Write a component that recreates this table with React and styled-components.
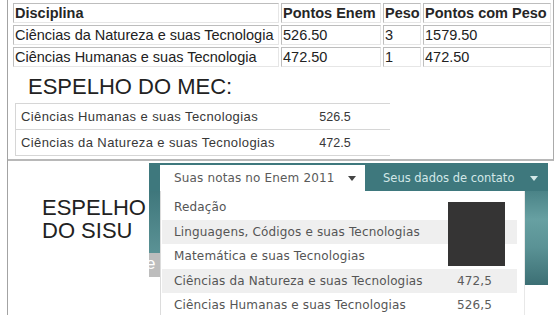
import React from "react";
import styled, { createGlobalStyle } from "styled-components";

const GlobalStyle = createGlobalStyle`
  html, body {
    margin: 0;
    padding: 0;
    background: #fff;
  }
  body {
    width: 560px;
    height: 315px;
    overflow: hidden;
    font-family: "Liberation Sans", Arial, sans-serif;
  }
  * {
    box-sizing: border-box;
  }
`;

const Page = styled.div`
  margin-left: 7px;
  width: 547px;
  height: 315px;
  border-left: 1px solid #a3a3a3;
`;

const TopFrame = styled.div`
  height: 161px;
  border-right: 1px solid #ababab;
  border-bottom: 2px solid #b8b8b8;
  padding: 1px 0 0 3px;
`;

const ScoreTable = styled.table`
  border-collapse: separate;
  border-spacing: 2px;
  table-layout: fixed;
  width: 542px;
  font-size: 14.5px;
  color: #1a1a1a;
`;

const Cell = styled.td`
  width: ${(p) => p.$w}px;
  height: 20px;
  padding: 0 1px;
  line-height: 18px;
  border: 1px solid;
  border-color: #bdbdbd #e6e6e6 #e6e6e6 #bdbdbd;
  text-align: left;
  white-space: nowrap;
  overflow: hidden;
  font-weight: ${(p) => (p.$head ? "bold" : "normal")};
  color: ${(p) => (p.$head ? "#262626" : "#222")};
`;

const Title = styled.h2`
  margin: 5px 0 3px 17px;
  font-size: 22px;
  line-height: 26px;
  font-weight: normal;
  color: #222;
`;

const MecTable = styled.div`
  margin-left: 4px;
  width: 375px;
  border-top: 1px solid #d6d6d6;
  border-left: 1px solid #d6d6d6;
`;

const MecRow = styled.div`
  display: flex;
  align-items: center;
  height: 26px;
  border-bottom: 1px solid #d6d6d6;
  color: #383838;
`;

const MecLabel = styled.span`
  width: 269px;
  padding-left: 5px;
  font-size: 13px;
  letter-spacing: 0.4px;
  white-space: nowrap;
`;

const MecValue = styled.span`
  width: 100px;
  text-align: center;
  font-size: 12.5px;
`;

const SisuSection = styled.div`
  display: flex;
  align-items: flex-start;
`;

const SisuTitle = styled.h2`
  margin: 35px 0 0 34px;
  width: 107px;
  font-size: 22px;
  line-height: 23px;
  font-weight: normal;
  color: #222;
`;

const Nav = styled.div`
  margin-top: 2px;
  width: 399px;
  display: flex;
  flex-direction: column;
  font-family: Verdana, "DejaVu Sans", sans-serif;
`;

const TabRow = styled.div`
  display: flex;
  height: 28px;
  padding: 2px 0 0 11px;
  background: #3e787d;
`;

const Tab = styled.div`
  display: flex;
  align-items: center;
  height: 26px;
  white-space: nowrap;
  ${(p) =>
    p.$active
      ? `
    width: 205px;
    padding-left: 14px;
    background: #fff;
    color: #5a5a5a;
    font-size: 12px;
    letter-spacing: 0.15px;
  `
      : `
    flex: 1;
    padding-left: 18px;
    color: #d3e8e8;
    font-size: 11.5px;
  `}
`;

const Caret = styled.span`
  margin-left: ${(p) => p.$gap}px;
  width: 0;
  height: 0;
  border-left: 4px solid transparent;
  border-right: 4px solid transparent;
  border-top: 5px solid ${(p) => p.$color};
`;

const Body = styled.div`
  display: flex;
  align-items: flex-start;
  height: 124px;
`;

const LeftStrip = styled.div`
  width: 11px;
  display: flex;
  flex-direction: column;
`;

const StripTeal = styled.div`
  height: 62px;
  background: linear-gradient(#3f777c, #5b9295);
`;

const StripGray = styled.div`
  height: 24px;
  overflow: hidden;
  background: #bdbdbd;
  color: #fff;
  font-family: "Liberation Sans", Arial, sans-serif;
  font-size: 17px;
  line-height: 22px;
  text-indent: -3px;
`;

const Menu = styled.div`
  position: relative;
  width: 365px;
  height: 124px;
  padding: 4px 7px 0 1px;
  background: #fff;
  border-left: 1px solid #dcdcdc;
  border-right: 1px solid #e8e8e8;
`;

const MenuItem = styled.div`
  display: flex;
  align-items: center;
  justify-content: space-between;
  height: 24.5px;
  padding-left: 12px;
  background: ${(p) => (p.$shade ? "#efefef" : "transparent")};
  color: #555;
  font-size: 12px;
  letter-spacing: 0.15px;
  white-space: nowrap;
`;

const Value = styled.span`
  width: 60px;
  color: #5c5c5c;
`;

const Photo = styled.div`
  position: absolute;
  left: 287px;
  top: 11px;
  width: 57px;
  height: 64px;
  background: #353434;
`;

const RightStrip = styled.div`
  width: 23px;
  height: 94px;
  background: linear-gradient(#4a8387, #67a0a2 30%, #5a9295 60%, #3c6f74);
`;

const scores = [
  ["Ciências da Natureza e suas Tecnologia", "526.50", "3", "1579.50"],
  ["Ciências Humanas e suas Tecnologia", "472.50", "1", "472.50"],
];

const widths = [266, 100, 38, 128];

const mec = [
  ["Ciências Humanas e suas Tecnologias", "526.5"],
  ["Ciências da Natureza e suas Tecnologias", "472.5"],
];

const sisu = [
  ["Redação", ""],
  ["Linguagens, Códigos e suas Tecnologias", ""],
  ["Matemática e suas Tecnologias", ""],
  ["Ciências da Natureza e suas Tecnologias", "472,5"],
  ["Ciências Humanas e suas Tecnologias", "526,5"],
];

export default function App() {
  return (
    <>
      <GlobalStyle />
      <Page>
        <TopFrame>
          <ScoreTable>
            <tbody>
              <tr>
                {["Disciplina", "Pontos Enem", "Peso", "Pontos com Peso"].map(
                  (h, i) => (
                    <Cell as="th" key={h} $w={widths[i]} $head>
                      {h}
                    </Cell>
                  )
                )}
              </tr>
              {scores.map((row) => (
                <tr key={row[0]}>
                  {row.map((v, i) => (
                    <Cell key={i} $w={widths[i]}>
                      {v}
                    </Cell>
                  ))}
                </tr>
              ))}
            </tbody>
          </ScoreTable>
          <Title>ESPELHO DO MEC:</Title>
          <MecTable>
            {mec.map(([label, value]) => (
              <MecRow key={label}>
                <MecLabel>{label}</MecLabel>
                <MecValue>{value}</MecValue>
              </MecRow>
            ))}
          </MecTable>
        </TopFrame>
        <SisuSection>
          <SisuTitle>
            ESPELHO
            <br />
            DO SISU
          </SisuTitle>
          <Nav>
            <TabRow>
              <Tab $active>
                Suas notas no Enem 2011
                <Caret $gap={13} $color="#444" />
              </Tab>
              <Tab>
                Seus dados de contato
                <Caret $gap={16} $color="#d3e8e8" />
              </Tab>
            </TabRow>
            <Body>
              <LeftStrip>
                <StripTeal />
                <StripGray>e</StripGray>
              </LeftStrip>
              <Menu>
                {sisu.map(([label, value], i) => (
                  <MenuItem key={label} $shade={i === 1 || i === 3}>
                    {label}
                    <Value>{value}</Value>
                  </MenuItem>
                ))}
                <Photo />
              </Menu>
              <RightStrip />
            </Body>
          </Nav>
        </SisuSection>
      </Page>
    </>
  );
}
